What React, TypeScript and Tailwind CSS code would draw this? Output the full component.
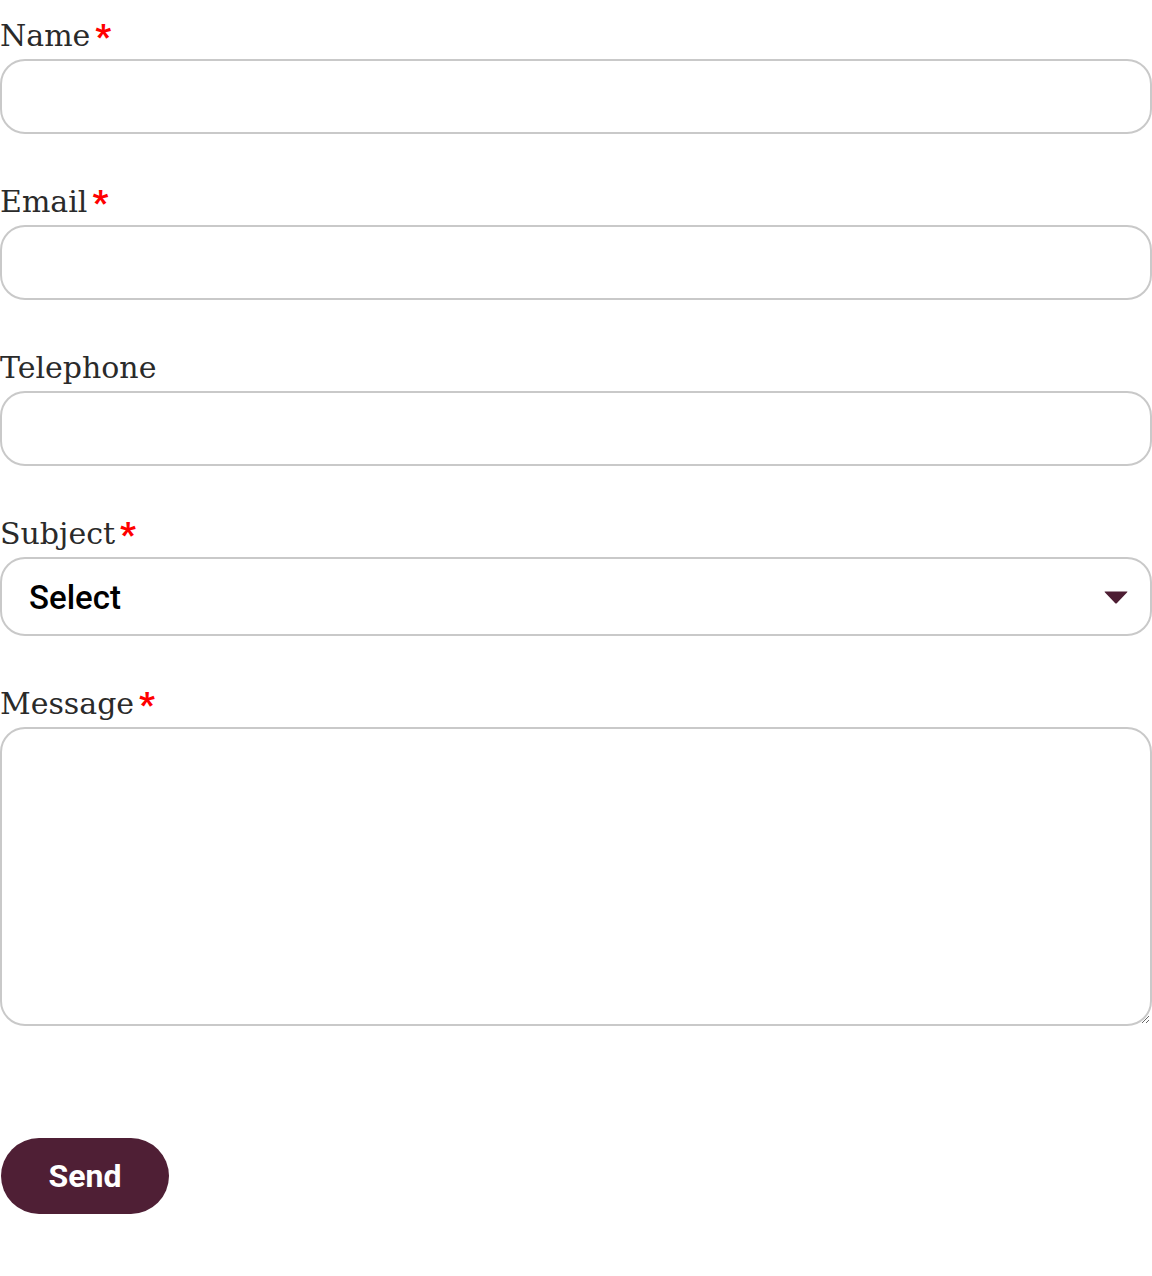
import React from "react";

const labelFont = { fontFamily: '"DejaVu Serif", serif' } as React.CSSProperties;

function Label({ text, required }: { text: string; required?: boolean }) {
  return (
    <label
      className="flex items-start h-[36px] leading-[36px] text-[30px] text-[#2a2a2a] mb-[5px]"
      style={{ ...labelFont, fontWeight: 300 }}
    >
      <span>{text}</span>
      {required && (
        <span
          className="ml-[5px] text-[34px] font-black text-[#ff0000] leading-[36px]"
          style={{ fontFamily: "Roboto, sans-serif" }}
        >
          *
        </span>
      )}
    </label>
  );
}

const inputCls =
  "block w-full h-[75px] rounded-[25px] border-2 border-[#c9c9c9] bg-white px-[26px] outline-none";

export default function App() {
  return (
    <div className="w-[1152px] bg-white pt-[18px] pb-[62px]" style={{ fontFamily: "Roboto, sans-serif" }}>
      <form className="flex flex-col" onSubmit={(e) => e.preventDefault()}>
        <div className="mb-[50px]">
          <Label text="Name" required />
          <input type="text" className={inputCls} />
        </div>
        <div className="mb-[50px]">
          <Label text="Email" required />
          <input type="email" className={inputCls} />
        </div>
        <div className="mb-[50px]">
          <Label text="Telephone" />
          <input type="tel" className={inputCls} />
        </div>
        <div className="mb-[50px]">
          <Label text="Subject" required />
          <div className="relative">
            <div className="flex items-center w-full h-[79px] rounded-[25px] border-2 border-[#c9c9c9] bg-white pl-[27px] pr-[22px]">
              <span className="flex-1 text-[33px] font-medium text-black pt-[3px]">Select</span>
              <svg width="24" height="13" viewBox="0 0 24 13" className="mt-[1px]">
                <path d="M1 0.5 L23 0.5 Q24 0.5 23 1.5 L13 12 Q12 13 11 12 L1 1.5 Q0 0.5 1 0.5 Z" fill="#4d1d33" />
              </svg>
            </div>
          </div>
        </div>
        <div className="mb-[112px]">
          <Label text="Message" required />
          <textarea className="block w-full h-[299px] rounded-[25px] border-2 border-[#c9c9c9] bg-white outline-none" />
        </div>
        <div>
          <button
            type="submit"
            className="ml-[1px] w-[168px] h-[76px] rounded-full bg-[#4f1f35] text-white text-[32px] font-bold"
          >
            Send
          </button>
        </div>
      </form>
    </div>
  );
}
